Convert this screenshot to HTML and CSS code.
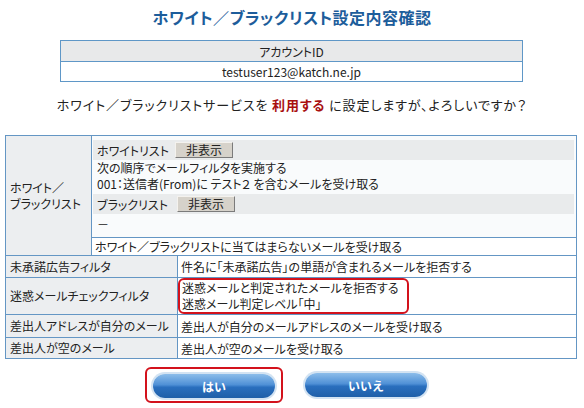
FILE: index.html
```html
<!DOCTYPE html>
<html lang="ja">
<head>
<meta charset="utf-8">
<title>ホワイト／ブラックリスト設定内容確認</title>
<link rel="stylesheet" href="styles.css">
</head>
<body>
<h1 class="title">ホワイト／ブラックリスト設定内容確認</h1>
<table class="account">
  <tr><th>アカウントID</th></tr>
  <tr><td>testuser123@katch.ne.jp</td></tr>
</table>
<p class="question">ホワイト／ブラックリストサービスを <strong>利用する</strong> に設定しますが、よろしいですか？</p>
<table class="main">
  <colgroup><col class="c1"><col class="c2"><col class="c3"></colgroup>
  <tr>
    <td class="label" rowspan="2">ホワイト／<br>ブラックリスト</td>
    <td class="lists" colspan="2">
      <div class="bar bar1"><span>ホワイトリスト</span><span class="hide">非表示</span></div>
      <div class="rules">次の順序でメールフィルタを実施する<br>001：送信者(From)に テスト２ を含むメールを受け取る</div>
      <div class="bar bar2"><span>ブラックリスト</span><span class="hide">非表示</span></div>
      <div class="dash">－</div>
    </td>
  </tr>
  <tr>
    <td class="val other" colspan="2">ホワイト／ブラックリストに当てはまらないメールを受け取る</td>
  </tr>
  <tr class="r22">
    <td class="label" colspan="2">未承諾広告フィルタ</td>
    <td class="val">件名に「未承諾広告」の単語が含まれるメールを拒否する</td>
  </tr>
  <tr class="r33">
    <td class="label" colspan="2">迷惑メールチェックフィルタ</td>
    <td class="val mark-cell"><div class="mark">迷惑メールと判定されたメールを拒否する<br>迷惑メール判定レベル「中」</div></td>
  </tr>
  <tr class="r23">
    <td class="label" colspan="2">差出人アドレスが自分のメール</td>
    <td class="val">差出人が自分のメールアドレスのメールを受け取る</td>
  </tr>
  <tr class="r21">
    <td class="label" colspan="2">差出人が空のメール</td>
    <td class="val">差出人が空のメールを受け取る</td>
  </tr>
</table>
<div class="actions">
  <div class="focus"><button class="pill" type="button">はい</button></div>
  <button class="pill" type="button">いいえ</button>
</div>
</body>
</html>
```
FILE: styles.css
```css
html, body {
  margin: 0;
  padding: 0;
  background: #ffffff;
}
body {
  font-family: "Noto Sans CJK JP", sans-serif;
  font-size: 12px;
  color: #222222;
  font-feature-settings: "palt";
  width: 584px;
}
.title {
  margin: 0;
  padding-top: 5px;
  height: 24px;
  line-height: 24px;
  text-align: center;
  font-size: 16px;
  font-weight: bold;
  letter-spacing: 0.5px;
  color: #1d5d9b;
}
.account {
  margin: 11px 0 0 60px;
  width: 463px;
  border-collapse: collapse;
  table-layout: fixed;
}
.account th, .account td {
  border: 1px solid #5f97c7;
  text-align: center;
  font-weight: normal;
  font-size: 12px;
  padding: 0;
}
.account th {
  background: #e8e9ea;
  height: 20px;
}
.account td {
  background: #ffffff;
  height: 19px;
}
.question {
  margin: 10px 0 17px 0;
  height: 26px;
  line-height: 26px;
  text-align: center;
  font-size: 13px;
  letter-spacing: 0.9px;
}
.question strong {
  color: #a80f0f;
  font-weight: bold;
}
.main {
  margin-left: 5px;
  width: 572px;
  border-collapse: collapse;
  table-layout: fixed;
}
.c1 { width: 86px; }
.c2 { width: 86px; }
.c3 { width: auto; }
.main td {
  border: 1px solid #6496c4;
  padding: 0;
  vertical-align: middle;
  line-height: 15px;
}
.label {
  background: #eceef0;
  padding-left: 4px !important;
  line-height: 16px !important;
}
.lists {
  background: #f9fbfc;
  padding: 4px 2px 3px 1px !important;
}
.bar {
  display: flex;
  align-items: center;
  gap: 6px;
  background: #e9ebec;
  height: 20px;
  padding-left: 4px;
}
.bar2 { margin-top: 2px; gap: 9px; }
.hide {
  display: inline-block;
  width: 56px;
  height: 14px;
  line-height: 14px;
  text-align: center;
  background: #d6d2ca;
  border-top: 1px solid #f4f2ee;
  border-left: 1px solid #f4f2ee;
  border-right: 1px solid #7b7b7b;
  border-bottom: 1px solid #7b7b7b;
}
.rules {
  padding: 0 0 0 4px;
  line-height: 16px;
}
.dash {
  height: 20px;
  line-height: 20px;
  padding-left: 4px;
}
.val {
  padding-left: 3px !important;
  background: #ffffff;
}
.other { height: 17px; }
.r22 td { height: 21px; }
.r33 td { height: 32px; }
.r23 td { height: 22px; }
.r21 td { height: 20px; }
.main td.mark-cell { padding: 0 !important; }
.mark {
  width: 222px;
  margin-left: 0;
  padding: 0 3px 0 2px;
  border: 2px solid #d3121c;
  border-radius: 6px;
  line-height: 16px;
}
.actions {
  display: flex;
  align-items: center;
  gap: 22px;
  margin-top: 8px;
  padding-left: 145px;
}
.focus {
  border: 2px solid #d3121c;
  border-radius: 6px;
  padding: 5px 6px 3px 6px;
  display: flex;
}
.pill {
  width: 122px;
  height: 24px;
  border: none;
  border-radius: 12px;
  padding: 0;
  font-family: "Noto Sans CJK JP", sans-serif;
  font-size: 12px;
  font-weight: bold;
  color: #ffffff;
  background: linear-gradient(#8cbdea 0%, #4f90d6 45%, #2a6fbe 55%, #1f5fa8 100%);
  box-shadow: 0 0 0 2px #d3e3f2;
}
```
